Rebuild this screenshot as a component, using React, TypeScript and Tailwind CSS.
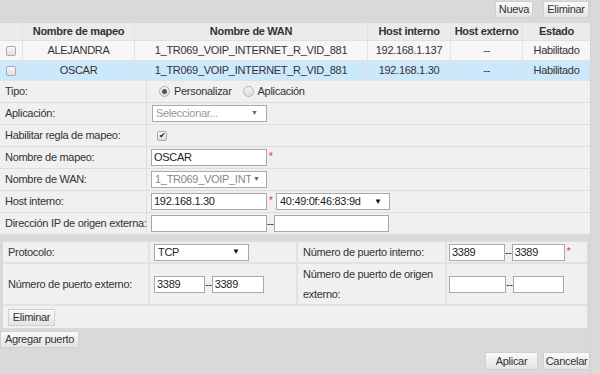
import React from "react";

const font = { fontFamily: '"Liberation Sans", Arial, sans-serif' };
const T = "text-[11px] tracking-[-0.3px] whitespace-nowrap";

function Btn({ children, className = "" }: { children: React.ReactNode; className?: string }) {
  return (
    <div
      className={
        "h-[17px] px-[4px] flex items-center justify-center text-[#333] border border-[#d0d0d0] bg-gradient-to-b from-[#fafafa] to-[#e4e4e4] " +
        T +
        " " +
        className
      }
    >
      {children}
    </div>
  );
}

function Input({ value = "", className = "" }: { value?: string; className?: string }) {
  return (
    <div className={"h-[17px] bg-white border border-[#a9a9a9] px-[2px] flex items-center text-[#222] " + T + " " + className}>
      {value}
    </div>
  );
}

function Select({ value, className = "", gray = false }: { value: string; className?: string; gray?: boolean }) {
  return (
    <div
      className={
        "h-[17px] bg-white border border-[#a9a9a9] pl-[3px] pr-[6px] flex items-center justify-between " +
        T +
        " " +
        (gray ? "text-[#999] " : "text-[#222] ") +
        className
      }
    >
      <span className="overflow-hidden">{value}</span>
      <span className={(gray ? "text-[7px] text-[#666]" : "text-[8px] text-[#111]") + " ml-[2px] tracking-normal"}>▼</span>
    </div>
  );
}

const Star = () => <span className="text-[#e33] text-[10px] self-start mt-[2px] ml-[2px] w-[5px]">*</span>;
const Dash = () => <span className={"text-[#333] leading-none " + T}>--</span>;

function Radio({ checked }: { checked?: boolean }) {
  return (
    <span className="w-[11px] h-[11px] rounded-full border border-[#b5b5b5] bg-gradient-to-b from-[#f4f4f4] to-[#dcdcdc] flex items-center justify-center">
      {checked && <span className="w-[5px] h-[5px] rounded-full bg-[#555]" />}
    </span>
  );
}

function FormRow({ label, children }: { label: string; children?: React.ReactNode }) {
  return (
    <div className="flex h-[22px] border-b border-[#dedede]">
      <div className={"w-[147px] bg-[#f0f0f0] border-r border-[#dedede] pl-[5px] flex items-center text-[#333] " + T}>{label}</div>
      <div className="flex-1 bg-[#f0f0f0] pl-[4px] flex items-center">{children}</div>
    </div>
  );
}

export default function App() {
  const cols = "grid grid-cols-[23px_112px_233px_83px_72px_67px]";
  const cell = "flex items-center justify-center border-r border-[#e2e2e2] text-[#333] " + T;
  const cbox = <span className="w-[10px] h-[10px] border border-[#aaa] rounded-[2px] bg-gradient-to-b from-[#f8f8f8] to-[#e0e0e0]" />;
  return (
    <div style={font} className="w-[600px] h-[374px] bg-[#d9d9d9] flex">
      <div className="w-[590px] flex flex-col">
        {/* top buttons */}
        <div className="h-[23px] flex items-start justify-end gap-[10px] pt-[1px] pr-[1px]">
          <Btn className="w-[38px]">Nueva</Btn>
          <Btn className="w-[46px]">Eliminar</Btn>
        </div>
        {/* table */}
        <div className={cols + " h-[18px] bg-[#ebebeb] border-b border-[#e0e0e0]"}>
          <div className={cell}></div>
          <div className={cell + " font-bold"}>Nombre de mapeo</div>
          <div className={cell + " font-bold"}>Nombre de WAN</div>
          <div className={cell + " font-bold"}>Host interno</div>
          <div className={cell + " font-bold"}>Host externo</div>
          <div className={cell + " font-bold border-r-0"}>Estado</div>
        </div>
        <div className={cols + " h-[20px] bg-[#f6f6f6] border-b border-[#e2e2e2]"}>
          <div className={cell}>{cbox}</div>
          <div className={cell}>ALEJANDRA</div>
          <div className={cell}>1_TR069_VOIP_INTERNET_R_VID_881</div>
          <div className={cell}>192.168.1.137</div>
          <div className={cell}>--</div>
          <div className={cell + " border-r-0"}>Habilitado</div>
        </div>
        <div className={cols + " h-[20px] bg-[#cce8fb] border-b border-[#e2e2e2]"}>
          <div className={cell}>{cbox}</div>
          <div className={cell}>OSCAR</div>
          <div className={cell}>1_TR069_VOIP_INTERNET_R_VID_881</div>
          <div className={cell}>192.168.1.30</div>
          <div className={cell}>--</div>
          <div className={cell + " border-r-0"}>Habilitado</div>
        </div>
        {/* form */}
        <FormRow label="Tipo:">
          <div className={"flex items-center text-[#333] pl-[8px] gap-[4px] " + T}>
            <Radio checked />
            <span>Personalizar</span>
            <span className="ml-[3px]" />
            <Radio />
            <span>Aplicación</span>
          </div>
        </FormRow>
        <FormRow label="Aplicación:">
          <Select value="Seleccionar..." gray className="w-[115px] ml-[1px] pr-[8px]" />
        </FormRow>
        <FormRow label="Habilitar regla de mapeo:">
          <span className="ml-[6px] w-[10px] h-[10px] border border-[#aaa] rounded-[2px] bg-gradient-to-b from-[#f8f8f8] to-[#dcdcdc] flex items-center justify-center text-[8px] leading-none text-[#222]">
            ✔
          </span>
        </FormRow>
        <FormRow label="Nombre de mapeo:">
          <Input value="OSCAR" className="w-[116px]" />
          <Star />
        </FormRow>
        <FormRow label="Nombre de WAN:">
          <Select value="1_TR069_VOIP_INT" gray className="w-[116px] pl-[2px] pr-[3px] !text-[#888]" />
        </FormRow>
        <FormRow label="Host interno:">
          <Input value="192.168.1.30" className="w-[116px]" />
          <Star />
          <Select value="40:49:0f:46:83:9d" className="w-[114px] ml-[2px] pr-[7px]" />
        </FormRow>
        <FormRow label="Dirección IP de origen externa:">
          <Input className="w-[116px]" />
          <Dash />
          <Input className="w-[115px]" />
        </FormRow>
        {/* ports section */}
        <div className="mt-[6px] ml-[3px] w-[584px] bg-[#f0f0f0] border-t border-[#dedede]">
          <div className="grid grid-cols-[147px_148px_149px_140px] h-[22px] border-b-2 border-[#e2e2e2]">
            <div className={"flex items-center pl-[5px] text-[#333] border-r-2 border-[#e2e2e2] " + T}>Protocolo:</div>
            <div className="flex items-center pl-[4px] border-r-2 border-[#e2e2e2]">
              <Select value="TCP" className="w-[95px] pr-[8px]" />
            </div>
            <div className={"flex items-center pl-[5px] text-[#333] border-r-2 border-[#e2e2e2] " + T}>Número de puerto interno:</div>
            <div className="flex items-center pl-[2px]">
              <Input value="3389" className="w-[56px]" />
              <Dash />
              <Input value="3389" className="w-[53px]" />
              <Star />
            </div>
          </div>
          <div className="grid grid-cols-[147px_148px_149px_140px] h-[42px] border-b-2 border-[#e2e2e2]">
            <div className={"flex items-center pl-[5px] text-[#333] border-r-2 border-[#e2e2e2] " + T}>Número de puerto externo:</div>
            <div className="flex items-center pl-[4px] border-r-2 border-[#e2e2e2]">
              <Input value="3389" className="w-[51px]" />
              <Dash />
              <Input value="3389" className="w-[52px]" />
            </div>
            <div className="flex flex-col justify-center pl-[5px] text-[11px] tracking-[-0.3px] leading-[20px] text-[#333] border-r-2 border-[#e2e2e2]">
              <span>Número de puerto de origen</span>
              <span>externo:</span>
            </div>
            <div className="flex items-center pl-[2px]">
              <Input className="w-[57px]" />
              <Dash />
              <Input className="w-[51px]" />
            </div>
          </div>
          <div className="h-[22px] flex items-center pl-[5px]">
            <Btn className="w-[47px]">Eliminar</Btn>
          </div>
        </div>
        <div className="mt-[3px] flex">
          <Btn className="w-[79px]">Agregar puerto</Btn>
        </div>
        <div className="mt-[4px] flex justify-end gap-[5px]">
          <Btn className="w-[53px] h-[18px]">Aplicar</Btn>
          <Btn className="w-[47px] h-[18px]">Cancelar</Btn>
        </div>
      </div>
      <div className="w-[10px] bg-[#dbdbdb] border-l border-[#d2d2d2]" />
    </div>
  );
}
